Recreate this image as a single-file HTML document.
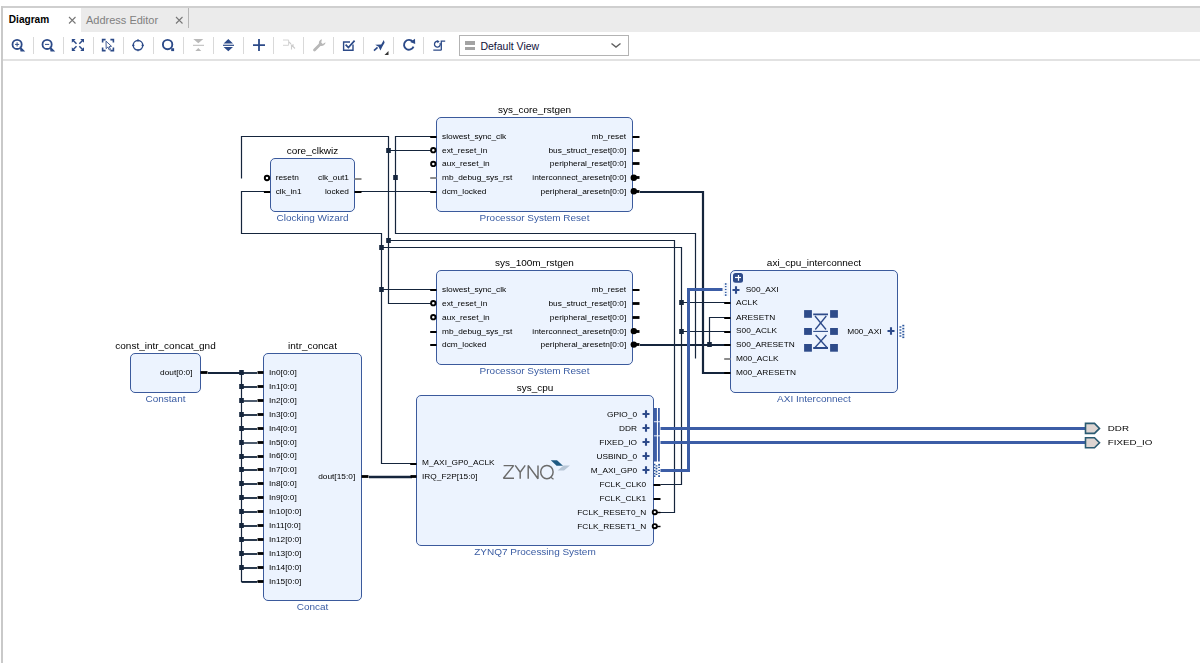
<!DOCTYPE html>
<html><head><meta charset="utf-8"><style>
html,body{margin:0;padding:0;background:#fff;width:1200px;height:663px;overflow:hidden;position:relative;font-family:"Liberation Sans",sans-serif}
.a{position:absolute}
svg text{font-family:"Liberation Sans",sans-serif}
</style></head><body>
<div class="a" style="left:0;top:0;width:1200px;height:5px;background:#fff"></div>
<div class="a" style="left:1px;top:5.5px;width:1199px;height:2px;background:#cfcfcf"></div>
<div class="a" style="left:1px;top:6px;width:1.6px;height:657px;background:#c9c9c9"></div>
<div class="a" style="left:2.6px;top:7.5px;width:1197.4px;height:24.2px;background:#ebebeb"></div>
<div class="a" style="left:2.6px;top:7.5px;width:78.6px;height:24.2px;background:#fff"></div>
<div class="a" style="left:8.8px;top:13px;font-size:10.1px;font-weight:bold;color:#000;line-height:14px">Diagram</div>
<svg class="a" style="left:68px;top:16px" width="9" height="9"><path d="M1,1 L7.5,7.5 M7.5,1 L1,7.5" stroke="#777" stroke-width="1.1"/></svg>
<div class="a" style="left:86px;top:12.7px;font-size:11px;color:#808080;line-height:14px">Address Editor</div>
<svg class="a" style="left:175px;top:16px" width="9" height="9"><path d="M1,1 L7.5,7.5 M7.5,1 L1,7.5" stroke="#777" stroke-width="1.1"/></svg>
<div class="a" style="left:187.6px;top:8px;width:1.4px;height:20px;background:#b5b5b5"></div>
<div class="a" style="left:2.6px;top:58.8px;width:1197.4px;height:2px;background:#e2e2e2"></div>
<div style="position:absolute;left:33px;top:37px;width:1px;height:17px;background:#d9d9d9"></div><div style="position:absolute;left:63px;top:37px;width:1px;height:17px;background:#d9d9d9"></div><div style="position:absolute;left:93px;top:37px;width:1px;height:17px;background:#d9d9d9"></div><div style="position:absolute;left:123px;top:37px;width:1px;height:17px;background:#d9d9d9"></div><div style="position:absolute;left:153px;top:37px;width:1px;height:17px;background:#d9d9d9"></div><div style="position:absolute;left:183px;top:37px;width:1px;height:17px;background:#d9d9d9"></div><div style="position:absolute;left:213px;top:37px;width:1px;height:17px;background:#d9d9d9"></div><div style="position:absolute;left:243px;top:37px;width:1px;height:17px;background:#d9d9d9"></div><div style="position:absolute;left:273px;top:37px;width:1px;height:17px;background:#d9d9d9"></div><div style="position:absolute;left:303px;top:37px;width:1px;height:17px;background:#d9d9d9"></div><div style="position:absolute;left:333px;top:37px;width:1px;height:17px;background:#d9d9d9"></div><div style="position:absolute;left:363px;top:37px;width:1px;height:17px;background:#d9d9d9"></div><div style="position:absolute;left:393px;top:37px;width:1px;height:17px;background:#d9d9d9"></div><div style="position:absolute;left:423px;top:37px;width:1px;height:17px;background:#d9d9d9"></div>
<svg class="a" style="left:0;top:0" width="460" height="60">
<circle cx="17.1" cy="44.4" r="4.6" fill="none" stroke="#2c4a88" stroke-width="1.8"/>
<path d="M15,44.4H19.2M17.1,42.3V46.5" stroke="#2c4a88" stroke-width="1"/>
<path d="M20.6,47.6 L23.8,50.8 L21,50.8 Z" fill="#2c4a88" stroke="#2c4a88" stroke-width="1.2"/>
<circle cx="47.1" cy="44.4" r="4.6" fill="none" stroke="#2c4a88" stroke-width="1.8"/>
<path d="M45,44.4H49.2" stroke="#2c4a88" stroke-width="1"/>
<path d="M50.6,47.6 L53.8,50.8 L51,50.8 Z" fill="#2c4a88" stroke="#2c4a88" stroke-width="1.2"/>
<path d="M71.8,39 H75.6 L71.8,42.8 Z M84,39 V42.8 L80.2,39 Z M71.8,51 V47.2 L75.6,51 Z M84,51 H80.2 L84,47.2 Z" fill="#2c4a88"/>
<path d="M72.5,39.7 L76.5,43.7 M83.3,39.7 L79.3,43.7 M72.5,50.3 L76.5,46.3 M83.3,50.3 L79.3,46.3" stroke="#2c4a88" stroke-width="1.5"/>
<path d="M102.6,42.6 V39.6 H105.6 M110.4,39.6 H113.4 V42.6 M113.4,47.6 V50.6 H110.4 M105.6,50.6 H102.6 V47.6" fill="none" stroke="#2c4a88" stroke-width="1.6"/>
<path d="M106,41.2 L106.2,48.6 L107.9,47 L109.3,50 L110.5,49.4 L109.2,46.5 L111.5,46.3 Z" fill="#fff" stroke="#2c4a88" stroke-width="0.9"/>
<circle cx="138" cy="45.3" r="4.8" fill="none" stroke="#2c4a88" stroke-width="1.4"/>
<path d="M138,39.3 V41.5 M138,49.1 V51.3 M132.2,45.3 H134.4 M141.6,45.3 H143.8" stroke="#2c4a88" stroke-width="1.2"/>
<circle cx="167.6" cy="44.6" r="4.7" fill="none" stroke="#2c4a88" stroke-width="1.9"/>
<rect x="171.2" y="48.2" width="2.9" height="2.9" fill="#2c4a88"/>
<path d="M193.3,39 H203.3 L198.3,43.2 Z M195.3,51 H201.3 L198.3,47.9 Z" fill="#b9b9b9"/>
<path d="M193,45.3 H204" stroke="#b9b9b9" stroke-width="1"/>
<path d="M223.6,43.6 H233 L228.3,39 Z M223.6,47 H233 L228.3,51.3 Z" fill="#2c4a88"/>
<path d="M223,45.3 H234" stroke="#2c4a88" stroke-width="1.2"/>
<path d="M259,39 V51 M253,45.2 H265" stroke="#2c4a88" stroke-width="1.8"/>
<path d="M283,40 H288.6 V45.3 H283" fill="none" stroke="#d4d4d4" stroke-width="1"/>
<path d="M289,42 L291,44 M291.5,49.5 L291.5,45 M291.5,45 L295,48.5 M290.8,45 H294" stroke="#cdcdcd" stroke-width="1.1" fill="none"/>
<path d="M314.5,50 L320.5,44" stroke="#b8b8b8" stroke-width="2.8" stroke-linecap="round"/>
<path d="M319.5,45 A3.6,3.6 0 0 1 322,39.3 L321.2,42.5 L322.8,44 L325.5,42.2 A3.6,3.6 0 0 1 319.5,45 Z" fill="#b8b8b8"/>
<path d="M353,44.5 V50.3 H343.6 V42 H350" fill="none" stroke="#2c4a88" stroke-width="1.4"/>
<path d="M345.6,44.6 L348.4,47.6 L354.6,40.6" fill="none" stroke="#2c4a88" stroke-width="1.7"/>
<path d="M374,50.6 L377.5,47.3" stroke="#2c4a88" stroke-width="1.6"/>
<path d="M375.2,44.8 L381.2,44.6 L383.8,40 L384.6,42.8 L382.4,46.6 L380.4,50.5 L378.6,46.8 Z" fill="#2c4a88"/>
<path d="M384.5,55 H388.5 V51 Z" fill="#333"/>
<path d="M413.5,46.6 A4.9,4.9 0 1 1 412.8,41.8" fill="none" stroke="#2c4a88" stroke-width="1.9"/>
<path d="M410.2,41.9 L415.2,43.9 L415,38.8 Z" fill="#2c4a88"/>
<path d="M438.6,41.6 A2.9,2.9 0 1 0 440,43" fill="none" stroke="#2c4a88" stroke-width="1.3"/>
<path d="M436.6,40 L439.6,41.3 L437.6,43.3 Z" fill="#2c4a88"/>
<path d="M441.3,50.2 V41.1 H445.2 M433.3,50.2 H441.3" fill="none" stroke="#2c4a88" stroke-width="1.3"/>
</svg>
<div class="a" style="left:459px;top:35px;width:168px;height:18.5px;border:1px solid #b3b3b3;background:#fff"></div>
<div class="a" style="left:465px;top:41px;width:10px;height:3.6px;background:#a3a3a3"></div>
<div class="a" style="left:465px;top:47px;width:10px;height:3.4px;background:#a3a3a3"></div>
<div class="a" style="left:480.4px;top:38.5px;font-size:10.5px;color:#10103a;line-height:14px">Default View</div>
<svg class="a" style="left:610px;top:40px" width="12" height="9"><path d="M1.5,3.5 L6,7 L10.5,3.5" fill="none" stroke="#606060" stroke-width="1.4"/></svg>
<svg class="a" style="left:0;top:0;will-change:transform" width="1200" height="663">
<polyline points="241.5,178.5 241.5,136.5 388.5,136.5 388.5,303.5 431.5,303.5" fill="none" stroke="#15253c" stroke-width="1.2" stroke-linejoin="miter"/>
<polyline points="388.5,150.5 431.5,150.5" fill="none" stroke="#15253c" stroke-width="1.2" stroke-linejoin="miter"/>
<polyline points="388.5,240.5 674.5,240.5 674.5,512.5 659.5,512.5" fill="none" stroke="#15253c" stroke-width="1.2" stroke-linejoin="miter"/>
<rect x="386.2" y="148.0" width="4.6" height="5" fill="#15253c"/>
<rect x="386.2" y="238.0" width="4.6" height="5" fill="#15253c"/>
<polyline points="268.5,191.5 241.5,191.5 241.5,233.5 381.5,233.5 381.5,463.5 411.5,463.5" fill="none" stroke="#15253c" stroke-width="1.2" stroke-linejoin="miter"/>
<polyline points="381.5,247.5 681.5,247.5 681.5,484.5 660.5,484.5" fill="none" stroke="#15253c" stroke-width="1.2" stroke-linejoin="miter"/>
<polyline points="381.5,289.5 431.5,289.5" fill="none" stroke="#15253c" stroke-width="1.2" stroke-linejoin="miter"/>
<polyline points="681.5,302.5 725.5,302.5" fill="none" stroke="#15253c" stroke-width="1.2" stroke-linejoin="miter"/>
<polyline points="681.5,331.5 725.5,331.5" fill="none" stroke="#15253c" stroke-width="1.2" stroke-linejoin="miter"/>
<rect x="379.2" y="245.0" width="4.6" height="5" fill="#15253c"/>
<rect x="379.2" y="287.0" width="4.6" height="5" fill="#15253c"/>
<rect x="679.2" y="300.0" width="4.6" height="5" fill="#15253c"/>
<rect x="679.2" y="329.0" width="4.6" height="5" fill="#15253c"/>
<polyline points="431.5,136.5 395.5,136.5 395.5,233.5 695.5,233.5 695.5,358.5" fill="none" stroke="#15253c" stroke-width="1.2" stroke-linejoin="miter"/>
<rect x="393.2" y="175.0" width="4.6" height="5" fill="#15253c"/>
<polyline points="360.5,191.5 431.5,191.5" fill="none" stroke="#15253c" stroke-width="1.2" stroke-linejoin="miter"/>
<polyline points="640,192 703,192 703,373 726,373" fill="none" stroke="#15253c" stroke-width="2.2" stroke-linejoin="miter"/>
<polyline points="640,345 726,345" fill="none" stroke="#15253c" stroke-width="2.2" stroke-linejoin="miter"/>
<polyline points="709.5,344.5 709.5,317.5 725.5,317.5" fill="none" stroke="#15253c" stroke-width="1.2" stroke-linejoin="miter"/>
<rect x="707.2" y="342.0" width="4.6" height="5" fill="#15253c"/>
<polyline points="208,373 242,373" fill="none" stroke="#15253c" stroke-width="2" stroke-linejoin="miter"/>
<polyline points="241.5,372.5 241.5,581.5 257.5,581.5" fill="none" stroke="#15253c" stroke-width="1.2" stroke-linejoin="miter"/>
<line x1="241.5" y1="373" x2="257" y2="373" stroke="#15253c" stroke-width="1.8"/>
<rect x="239.2" y="370.0" width="4.6" height="5" fill="#15253c"/>
<line x1="241.5" y1="387" x2="257" y2="387" stroke="#15253c" stroke-width="1.8"/>
<rect x="239.2" y="384.0" width="4.6" height="5" fill="#15253c"/>
<line x1="241.5" y1="401" x2="257" y2="401" stroke="#3a4a5e" stroke-width="1.8"/>
<rect x="239.2" y="398.0" width="4.6" height="5" fill="#15253c"/>
<line x1="241.5" y1="415" x2="257" y2="415" stroke="#15253c" stroke-width="1.8"/>
<rect x="239.2" y="412.0" width="4.6" height="5" fill="#15253c"/>
<line x1="241.5" y1="429" x2="257" y2="429" stroke="#15253c" stroke-width="1.8"/>
<rect x="239.2" y="426.0" width="4.6" height="5" fill="#15253c"/>
<line x1="241.5" y1="443" x2="257" y2="443" stroke="#3a4a5e" stroke-width="1.8"/>
<rect x="239.2" y="440.0" width="4.6" height="5" fill="#15253c"/>
<line x1="241.5" y1="457" x2="257" y2="457" stroke="#15253c" stroke-width="1.8"/>
<rect x="239.2" y="454.0" width="4.6" height="5" fill="#15253c"/>
<line x1="241.5" y1="470" x2="257" y2="470" stroke="#15253c" stroke-width="1.8"/>
<rect x="239.2" y="467.0" width="4.6" height="5" fill="#15253c"/>
<line x1="241.5" y1="484" x2="257" y2="484" stroke="#15253c" stroke-width="1.8"/>
<rect x="239.2" y="481.0" width="4.6" height="5" fill="#15253c"/>
<line x1="241.5" y1="498" x2="257" y2="498" stroke="#15253c" stroke-width="1.8"/>
<rect x="239.2" y="495.0" width="4.6" height="5" fill="#15253c"/>
<line x1="241.5" y1="512" x2="257" y2="512" stroke="#15253c" stroke-width="1.8"/>
<rect x="239.2" y="509.0" width="4.6" height="5" fill="#15253c"/>
<line x1="241.5" y1="526" x2="257" y2="526" stroke="#15253c" stroke-width="1.8"/>
<rect x="239.2" y="523.0" width="4.6" height="5" fill="#15253c"/>
<line x1="241.5" y1="540" x2="257" y2="540" stroke="#15253c" stroke-width="1.8"/>
<rect x="239.2" y="537.0" width="4.6" height="5" fill="#15253c"/>
<line x1="241.5" y1="554" x2="257" y2="554" stroke="#15253c" stroke-width="1.8"/>
<rect x="239.2" y="551.0" width="4.6" height="5" fill="#15253c"/>
<line x1="241.5" y1="568" x2="257" y2="568" stroke="#15253c" stroke-width="1.8"/>
<rect x="239.2" y="565.0" width="4.6" height="5" fill="#15253c"/>
<line x1="241.5" y1="582" x2="257" y2="582" stroke="#15253c" stroke-width="1.8"/>
<polyline points="369,477 412,477" fill="none" stroke="#15253c" stroke-width="2.4" stroke-linejoin="miter"/>
<polyline points="660.5,428.5 1086.5,428.5" fill="none" stroke="#3c5da6" stroke-width="3" stroke-linejoin="miter"/>
<polyline points="660.5,442.5 1086.5,442.5" fill="none" stroke="#3c5da6" stroke-width="3" stroke-linejoin="miter"/>
<polyline points="660.5,470.5 688.5,470.5 688.5,289.5 722.5,289.5" fill="none" stroke="#3c5da6" stroke-width="3" stroke-linejoin="miter"/>
<rect x="270.5" y="158.5" width="84.0" height="53.0" rx="4.5" ry="4.5" fill="#ecf3fe" stroke="#3b5a9c" stroke-width="1"/>
<text transform="translate(312.5,154.0) scale(1,0.82)" font-size="10" text-anchor="middle" fill="#000"  >core_clkwiz</text>
<text transform="translate(312.5,221.1) scale(1,0.82)" font-size="10" text-anchor="middle" fill="#3a5ca3"  >Clocking Wizard</text>
<circle cx="267.0" cy="178" r="2.2" fill="#fff" stroke="#000" stroke-width="1.9"/>
<text transform="translate(275.7,180.4) scale(1,0.82)" font-size="8.33" text-anchor="start" fill="#000"  >resetn</text>
<line x1="263.9" y1="192" x2="270.2" y2="192" stroke="#000" stroke-width="2"/>
<text transform="translate(275.7,193.70000000000002) scale(1,0.82)" font-size="8.33" text-anchor="start" fill="#000"  >clk_in1</text>
<line x1="354.5" y1="179" x2="361.5" y2="179" stroke="#8c8c8c" stroke-width="2"/>
<text transform="translate(349.0,180.4) scale(1,0.82)" font-size="8.33" text-anchor="end" fill="#000"  >clk_out1</text>
<line x1="354.5" y1="192" x2="361.5" y2="192" stroke="#000" stroke-width="2"/>
<text transform="translate(349.0,193.70000000000002) scale(1,0.82)" font-size="8.33" text-anchor="end" fill="#000"  >locked</text>
<rect x="436.5" y="117.5" width="196.0" height="94.0" rx="4.5" ry="4.5" fill="#ecf3fe" stroke="#3b5a9c" stroke-width="1"/>
<text transform="translate(534.5,113.0) scale(1,0.82)" font-size="10" text-anchor="middle" fill="#000"  >sys_core_rstgen</text>
<text transform="translate(534.5,221.1) scale(1,0.82)" font-size="10" text-anchor="middle" fill="#3a5ca3"  >Processor System Reset</text>
<line x1="430.2" y1="137" x2="436.5" y2="137" stroke="#000" stroke-width="2"/>
<text transform="translate(442.0,138.9) scale(1,0.82)" font-size="8.33" text-anchor="start" fill="#000"  >slowest_sync_clk</text>
<circle cx="433.3" cy="150.2" r="2.2" fill="#fff" stroke="#000" stroke-width="1.9"/>
<text transform="translate(442.0,152.6) scale(1,0.82)" font-size="8.33" text-anchor="start" fill="#000"  >ext_reset_in</text>
<circle cx="433.3" cy="163.9" r="2.2" fill="#fff" stroke="#000" stroke-width="1.9"/>
<text transform="translate(442.0,166.3) scale(1,0.82)" font-size="8.33" text-anchor="start" fill="#000"  >aux_reset_in</text>
<line x1="430.2" y1="178" x2="436.5" y2="178" stroke="#8c8c8c" stroke-width="2"/>
<text transform="translate(442.0,180.1) scale(1,0.82)" font-size="8.33" text-anchor="start" fill="#000"  >mb_debug_sys_rst</text>
<line x1="430.2" y1="192" x2="436.5" y2="192" stroke="#000" stroke-width="2"/>
<text transform="translate(442.0,193.70000000000002) scale(1,0.82)" font-size="8.33" text-anchor="start" fill="#000"  >dcm_locked</text>
<line x1="632.5" y1="137" x2="639.5" y2="137" stroke="#000" stroke-width="2"/>
<text transform="translate(626.2,138.9) scale(1,0.82)" font-size="8.33" text-anchor="end" fill="#000"  >mb_reset</text>
<line x1="632.5" y1="150.5" x2="639.5" y2="150.5" stroke="#000" stroke-width="2.8"/>
<text transform="translate(626.2,152.6) scale(1,0.82)" font-size="8.33" text-anchor="end" fill="#000"  >bus_struct_reset[0:0]</text>
<line x1="632.5" y1="163.5" x2="639.5" y2="163.5" stroke="#000" stroke-width="2.8"/>
<text transform="translate(626.2,166.3) scale(1,0.82)" font-size="8.33" text-anchor="end" fill="#000"  >peripheral_reset[0:0]</text>
<line x1="632.5" y1="177.5" x2="639.5" y2="177.5" stroke="#000" stroke-width="2.8"/>
<circle cx="633.8" cy="177.7" r="3.2" fill="#000"/>
<text transform="translate(626.2,180.1) scale(1,0.82)" font-size="8.33" text-anchor="end" fill="#000"  >interconnect_aresetn[0:0]</text>
<line x1="632.5" y1="191.5" x2="639.5" y2="191.5" stroke="#000" stroke-width="2.8"/>
<circle cx="633.8" cy="191.3" r="3.2" fill="#000"/>
<text transform="translate(626.2,193.70000000000002) scale(1,0.82)" font-size="8.33" text-anchor="end" fill="#000"  >peripheral_aresetn[0:0]</text>
<rect x="436.5" y="270.5" width="196.0" height="94.0" rx="4.5" ry="4.5" fill="#ecf3fe" stroke="#3b5a9c" stroke-width="1"/>
<text transform="translate(534.5,266.0) scale(1,0.82)" font-size="10" text-anchor="middle" fill="#000"  >sys_100m_rstgen</text>
<text transform="translate(534.5,374.1) scale(1,0.82)" font-size="10" text-anchor="middle" fill="#3a5ca3"  >Processor System Reset</text>
<line x1="430.2" y1="290" x2="436.5" y2="290" stroke="#000" stroke-width="2"/>
<text transform="translate(442.0,291.7) scale(1,0.82)" font-size="8.33" text-anchor="start" fill="#000"  >slowest_sync_clk</text>
<circle cx="433.3" cy="303.2" r="2.2" fill="#fff" stroke="#000" stroke-width="1.9"/>
<text transform="translate(442.0,305.59999999999997) scale(1,0.82)" font-size="8.33" text-anchor="start" fill="#000"  >ext_reset_in</text>
<circle cx="433.3" cy="317.2" r="2.2" fill="#fff" stroke="#000" stroke-width="1.9"/>
<text transform="translate(442.0,319.59999999999997) scale(1,0.82)" font-size="8.33" text-anchor="start" fill="#000"  >aux_reset_in</text>
<line x1="430.2" y1="332" x2="436.5" y2="332" stroke="#000" stroke-width="2"/>
<text transform="translate(442.0,333.5) scale(1,0.82)" font-size="8.33" text-anchor="start" fill="#000"  >mb_debug_sys_rst</text>
<line x1="430.2" y1="345" x2="436.5" y2="345" stroke="#000" stroke-width="2"/>
<text transform="translate(442.0,347.0) scale(1,0.82)" font-size="8.33" text-anchor="start" fill="#000"  >dcm_locked</text>
<line x1="632.5" y1="290" x2="639.5" y2="290" stroke="#000" stroke-width="2"/>
<text transform="translate(626.2,291.7) scale(1,0.82)" font-size="8.33" text-anchor="end" fill="#000"  >mb_reset</text>
<line x1="632.5" y1="303.5" x2="639.5" y2="303.5" stroke="#000" stroke-width="2.8"/>
<text transform="translate(626.2,305.59999999999997) scale(1,0.82)" font-size="8.33" text-anchor="end" fill="#000"  >bus_struct_reset[0:0]</text>
<line x1="632.5" y1="317.5" x2="639.5" y2="317.5" stroke="#000" stroke-width="2.8"/>
<text transform="translate(626.2,319.59999999999997) scale(1,0.82)" font-size="8.33" text-anchor="end" fill="#000"  >peripheral_reset[0:0]</text>
<line x1="632.5" y1="331.5" x2="639.5" y2="331.5" stroke="#000" stroke-width="2.8"/>
<circle cx="633.8" cy="331.1" r="3.2" fill="#000"/>
<text transform="translate(626.2,333.5) scale(1,0.82)" font-size="8.33" text-anchor="end" fill="#000"  >interconnect_aresetn[0:0]</text>
<line x1="632.5" y1="344.5" x2="639.5" y2="344.5" stroke="#000" stroke-width="2.8"/>
<circle cx="633.8" cy="344.6" r="3.2" fill="#000"/>
<text transform="translate(626.2,347.0) scale(1,0.82)" font-size="8.33" text-anchor="end" fill="#000"  >peripheral_aresetn[0:0]</text>
<rect x="730.5" y="270.5" width="167.0" height="122.0" rx="4.5" ry="4.5" fill="#ecf3fe" stroke="#3b5a9c" stroke-width="1"/>
<text transform="translate(814.0,266.0) scale(1,0.82)" font-size="10" text-anchor="middle" fill="#000"  >axi_cpu_interconnect</text>
<text transform="translate(814.0,402.1) scale(1,0.82)" font-size="10" text-anchor="middle" fill="#3a5ca3"  >AXI Interconnect</text>
<rect x="733" y="273" width="10" height="9.8" rx="2.5" fill="#2e4b8a"/>
<line x1="735" y1="277.5" x2="741" y2="277.5" stroke="#fff" stroke-width="1.2"/>
<line x1="738.5" y1="275" x2="738.5" y2="280.8" stroke="#fff" stroke-width="1.2"/>
<rect x="723.2" y="283" width="5.5" height="13" fill="#f3f6fb"/>
<rect x="724.9" y="283.2" width="1.6" height="1.6" fill="#2f5aa0"/>
<rect x="724.9" y="286.05" width="1.6" height="1.1" fill="#2f5aa0"/>
<rect x="724.9" y="288.95" width="1.6" height="1.1" fill="#2f5aa0"/>
<rect x="724.9" y="291.84999999999997" width="1.6" height="1.1" fill="#2f5aa0"/>
<rect x="724.9" y="294.3" width="1.6" height="1.6" fill="#2f5aa0"/>
<path d="M732.5,290H739.5M736,286.2V293.8" stroke="#2d4a8a" stroke-width="2.1"/>
<text transform="translate(745.7,292.2) scale(1,0.82)" font-size="8.33" text-anchor="start" fill="#000"  >S00_AXI</text>
<line x1="724.2" y1="303" x2="730.5" y2="303" stroke="#000" stroke-width="2"/>
<text transform="translate(736.0,305.09999999999997) scale(1,0.82)" font-size="8.33" text-anchor="start" fill="#000"  >ACLK</text>
<line x1="724.2" y1="318" x2="730.5" y2="318" stroke="#000" stroke-width="2"/>
<text transform="translate(736.0,319.7) scale(1,0.82)" font-size="8.33" text-anchor="start" fill="#000"  >ARESETN</text>
<line x1="724.2" y1="332" x2="730.5" y2="332" stroke="#000" stroke-width="2"/>
<text transform="translate(736.0,333.4) scale(1,0.82)" font-size="8.33" text-anchor="start" fill="#000"  >S00_ACLK</text>
<line x1="724.2" y1="345" x2="730.5" y2="345" stroke="#000" stroke-width="2"/>
<text transform="translate(736.0,346.9) scale(1,0.82)" font-size="8.33" text-anchor="start" fill="#000"  >S00_ARESETN</text>
<line x1="724.2" y1="359" x2="730.5" y2="359" stroke="#8c8c8c" stroke-width="2"/>
<text transform="translate(736.0,360.59999999999997) scale(1,0.82)" font-size="8.33" text-anchor="start" fill="#000"  >M00_ACLK</text>
<line x1="724.2" y1="373" x2="730.5" y2="373" stroke="#000" stroke-width="2"/>
<text transform="translate(736.0,374.7) scale(1,0.82)" font-size="8.33" text-anchor="start" fill="#000"  >M00_ARESETN</text>
<rect x="804.1" y="310.1" width="7.8" height="7.7" fill="#2e4b8a"/>
<rect x="830.1" y="310.1" width="7.8" height="7.7" fill="#2e4b8a"/>
<rect x="804.1" y="328" width="7.8" height="6.9" fill="#2e4b8a"/>
<rect x="830.1" y="328" width="7.8" height="6.9" fill="#2e4b8a"/>
<rect x="804.1" y="344" width="7.8" height="7.7" fill="#2e4b8a"/>
<rect x="830.1" y="344" width="7.8" height="7.7" fill="#2e4b8a"/>
<path d="M813.2,314.4 H828 M813.2,348 H828" stroke="#2e4b8a" stroke-width="1.9" fill="none"/>
<path d="M813.2,331.4 H828" stroke="#2e4b8a" stroke-width="1.1" fill="none"/>
<path d="M815,316 L826,329.5 M826.3,316 L815.3,329.5 M815.6,335 L827,347.5 M826.4,335 L815,347.5" stroke="#2e4b8a" stroke-width="1.3" fill="none"/>
<text transform="translate(847.3,333.6) scale(1,0.82)" font-size="8.33" text-anchor="start" fill="#000"  >M00_AXI</text>
<path d="M887.5,331H894.5M891,327.2V334.8" stroke="#2d4a8a" stroke-width="2.1"/>
<rect x="899.4" y="326.3" width="2" height="1.4" fill="#2f5aa0"/>
<rect x="899.4" y="329.3" width="2" height="1.4" fill="#2f5aa0"/>
<rect x="899.4" y="332.3" width="2" height="1.4" fill="#2f5aa0"/>
<rect x="899.4" y="335.3" width="2" height="1.4" fill="#2f5aa0"/>
<rect x="902.3" y="324.8" width="2" height="1.6" fill="#2f5aa0"/>
<rect x="902.3" y="327.8" width="2" height="1.6" fill="#2f5aa0"/>
<rect x="902.3" y="330.8" width="2" height="1.6" fill="#2f5aa0"/>
<rect x="902.3" y="333.8" width="2" height="1.6" fill="#2f5aa0"/>
<rect x="902.3" y="336.5" width="2" height="1.6" fill="#2f5aa0"/>
<rect x="416.5" y="395.5" width="237.0" height="150.0" rx="4.5" ry="4.5" fill="#ecf3fe" stroke="#3b5a9c" stroke-width="1"/>
<text transform="translate(535.0,391.0) scale(1,0.82)" font-size="10" text-anchor="middle" fill="#000"  >sys_cpu</text>
<text transform="translate(535.0,555.1) scale(1,0.82)" font-size="10" text-anchor="middle" fill="#3a5ca3"  >ZYNQ7 Processing System</text>
<line x1="410.2" y1="464" x2="416.5" y2="464" stroke="#000" stroke-width="2"/>
<text transform="translate(422.0,465.4) scale(1,0.82)" font-size="8.33" text-anchor="start" fill="#000"  >M_AXI_GP0_ACLK</text>
<line x1="410.5" y1="476.5" x2="416.5" y2="476.5" stroke="#000" stroke-width="2.8"/>
<text transform="translate(422.0,479.0) scale(1,0.82)" font-size="8.33" text-anchor="start" fill="#000"  >IRQ_F2P[15:0]</text>
<text transform="translate(637.1,416.59999999999997) scale(1,0.82)" font-size="8.33" text-anchor="end" fill="#000"  >GPIO_0</text>
<path d="M642.5,414H649.5M646,410.2V417.8" stroke="#2d4a8a" stroke-width="2.1"/>
<text transform="translate(637.1,430.59999999999997) scale(1,0.82)" font-size="8.33" text-anchor="end" fill="#000"  >DDR</text>
<path d="M642.5,428H649.5M646,424.2V431.8" stroke="#2d4a8a" stroke-width="2.1"/>
<text transform="translate(637.1,444.59999999999997) scale(1,0.82)" font-size="8.33" text-anchor="end" fill="#000"  >FIXED_IO</text>
<path d="M642.5,442H649.5M646,438.2V445.8" stroke="#2d4a8a" stroke-width="2.1"/>
<text transform="translate(637.1,458.59999999999997) scale(1,0.82)" font-size="8.33" text-anchor="end" fill="#000"  >USBIND_0</text>
<path d="M642.5,456H649.5M646,452.2V459.8" stroke="#2d4a8a" stroke-width="2.1"/>
<text transform="translate(637.1,472.59999999999997) scale(1,0.82)" font-size="8.33" text-anchor="end" fill="#000"  >M_AXI_GP0</text>
<path d="M642.5,470H649.5M646,466.2V473.8" stroke="#2d4a8a" stroke-width="2.1"/>
<rect x="654" y="408" width="2.9" height="53.5" fill="#3c5da6"/>
<rect x="658" y="408" width="1.8" height="53.5" fill="#3c5da6"/>
<rect x="653.9" y="421.3" width="7" height="0.9" fill="#fff"/>
<rect x="653.9" y="435.4" width="7" height="0.9" fill="#fff"/>
<rect x="653.8" y="463.8" width="1.6" height="1.6" fill="#2f5aa0"/>
<rect x="653.8" y="466.90000000000003" width="1.6" height="1.4" fill="#2f5aa0"/>
<rect x="653.8" y="469.90000000000003" width="1.6" height="1.4" fill="#2f5aa0"/>
<rect x="653.8" y="472.90000000000003" width="1.6" height="1.4" fill="#2f5aa0"/>
<rect x="653.8" y="475.4" width="1.6" height="1.6" fill="#2f5aa0"/>
<rect x="655.6" y="465.29999999999995" width="1.8" height="1.2" fill="#2f5aa0"/>
<rect x="655.6" y="467.70000000000005" width="1.8" height="1.8" fill="#2f5aa0"/>
<rect x="655.6" y="470.70000000000005" width="1.8" height="1.8" fill="#2f5aa0"/>
<rect x="655.6" y="473.79999999999995" width="1.8" height="1.2" fill="#2f5aa0"/>
<rect x="658.2" y="463.90000000000003" width="1.8" height="1.8" fill="#2f5aa0"/>
<rect x="658.2" y="466.84999999999997" width="1.8" height="1.1" fill="#2f5aa0"/>
<rect x="658.2" y="469.84999999999997" width="1.8" height="1.1" fill="#2f5aa0"/>
<rect x="658.2" y="472.84999999999997" width="1.8" height="1.1" fill="#2f5aa0"/>
<rect x="658.2" y="475.20000000000005" width="1.8" height="1.8" fill="#2f5aa0"/>
<line x1="653.5" y1="485" x2="660.5" y2="485" stroke="#000" stroke-width="2"/>
<text transform="translate(646.2,486.59999999999997) scale(1,0.82)" font-size="8.33" text-anchor="end" fill="#000"  >FCLK_CLK0</text>
<line x1="653.5" y1="499" x2="660.5" y2="499" stroke="#000" stroke-width="2"/>
<text transform="translate(646.2,500.59999999999997) scale(1,0.82)" font-size="8.33" text-anchor="end" fill="#000"  >FCLK_CLK1</text>
<line x1="656.5" y1="512.5" x2="660.5" y2="512.5" stroke="#000" stroke-width="1.4"/>
<circle cx="654.8" cy="512.2" r="2.1" fill="#fff" stroke="#000" stroke-width="1.9"/>
<text transform="translate(646.2,514.6) scale(1,0.82)" font-size="8.33" text-anchor="end" fill="#000"  >FCLK_RESET0_N</text>
<line x1="656.5" y1="526.5" x2="660.5" y2="526.5" stroke="#000" stroke-width="1.4"/>
<circle cx="654.8" cy="526.2" r="2.1" fill="#fff" stroke="#000" stroke-width="1.9"/>
<text transform="translate(646.2,528.6) scale(1,0.82)" font-size="8.33" text-anchor="end" fill="#000"  >FCLK_RESET1_N</text>
<path d="M503.6,465.6 H513.6 L503.4,478.3 H514 M515.2,465.4 L520.2,472.3 L525.2,465.4 M520.2,472.3 V478.8 M528.2,478.8 V465.4 L538,478.8 V465.4" fill="none" stroke="#6b6b6b" stroke-width="1.45" stroke-linejoin="bevel"/>
<ellipse cx="546.9" cy="472.1" rx="6.2" ry="6.7" fill="none" stroke="#6b6b6b" stroke-width="1.45"/>
<path d="M550.5,477 L553.5,479.3" stroke="#6b6b6b" stroke-width="1.2"/>
<polygon points="550.8,460.2 557,460.2 563,465.8 556.6,465.8" fill="#1f5a82"/>
<polygon points="563.5,465.4 570,465.4 564,470.6 557.6,470.6" fill="#b7c6d6"/>
<rect x="130.5" y="353.5" width="70.0" height="39.0" rx="4.5" ry="4.5" fill="#ecf3fe" stroke="#3b5a9c" stroke-width="1"/>
<text transform="translate(165.5,349.0) scale(1,0.82)" font-size="10" text-anchor="middle" fill="#000"  >const_intr_concat_gnd</text>
<text transform="translate(165.5,402.1) scale(1,0.82)" font-size="10" text-anchor="middle" fill="#3a5ca3"  >Constant</text>
<line x1="200.5" y1="372.5" x2="207.5" y2="372.5" stroke="#000" stroke-width="2.8"/>
<text transform="translate(192.5,374.9) scale(1,0.82)" font-size="8.33" text-anchor="end" fill="#000"  >dout[0:0]</text>
<rect x="263.5" y="353.5" width="98.0" height="247.0" rx="4.5" ry="4.5" fill="#ecf3fe" stroke="#3b5a9c" stroke-width="1"/>
<text transform="translate(312.5,349.0) scale(1,0.82)" font-size="10" text-anchor="middle" fill="#000"  >intr_concat</text>
<text transform="translate(312.5,610.1) scale(1,0.82)" font-size="10" text-anchor="middle" fill="#3a5ca3"  >Concat</text>
<line x1="257.5" y1="372.5" x2="263.5" y2="372.5" stroke="#000" stroke-width="2.8"/>
<text transform="translate(269.0,374.9) scale(1,0.82)" font-size="8.33" text-anchor="start" fill="#000"  >In0[0:0]</text>
<line x1="257.5" y1="386.5" x2="263.5" y2="386.5" stroke="#000" stroke-width="2.8"/>
<text transform="translate(269.0,388.82) scale(1,0.82)" font-size="8.33" text-anchor="start" fill="#000"  >In1[0:0]</text>
<line x1="257.5" y1="400.5" x2="263.5" y2="400.5" stroke="#000" stroke-width="2.8"/>
<text transform="translate(269.0,402.73999999999995) scale(1,0.82)" font-size="8.33" text-anchor="start" fill="#000"  >In2[0:0]</text>
<line x1="257.5" y1="414.5" x2="263.5" y2="414.5" stroke="#000" stroke-width="2.8"/>
<text transform="translate(269.0,416.65999999999997) scale(1,0.82)" font-size="8.33" text-anchor="start" fill="#000"  >In3[0:0]</text>
<line x1="257.5" y1="428.5" x2="263.5" y2="428.5" stroke="#000" stroke-width="2.8"/>
<text transform="translate(269.0,430.58) scale(1,0.82)" font-size="8.33" text-anchor="start" fill="#000"  >In4[0:0]</text>
<line x1="257.5" y1="442.5" x2="263.5" y2="442.5" stroke="#000" stroke-width="2.8"/>
<text transform="translate(269.0,444.5) scale(1,0.82)" font-size="8.33" text-anchor="start" fill="#000"  >In5[0:0]</text>
<line x1="257.5" y1="456.5" x2="263.5" y2="456.5" stroke="#000" stroke-width="2.8"/>
<text transform="translate(269.0,458.41999999999996) scale(1,0.82)" font-size="8.33" text-anchor="start" fill="#000"  >In6[0:0]</text>
<line x1="257.5" y1="469.5" x2="263.5" y2="469.5" stroke="#000" stroke-width="2.8"/>
<text transform="translate(269.0,472.34) scale(1,0.82)" font-size="8.33" text-anchor="start" fill="#000"  >In7[0:0]</text>
<line x1="257.5" y1="483.5" x2="263.5" y2="483.5" stroke="#000" stroke-width="2.8"/>
<text transform="translate(269.0,486.26) scale(1,0.82)" font-size="8.33" text-anchor="start" fill="#000"  >In8[0:0]</text>
<line x1="257.5" y1="497.5" x2="263.5" y2="497.5" stroke="#000" stroke-width="2.8"/>
<text transform="translate(269.0,500.17999999999995) scale(1,0.82)" font-size="8.33" text-anchor="start" fill="#000"  >In9[0:0]</text>
<line x1="257.5" y1="511.5" x2="263.5" y2="511.5" stroke="#000" stroke-width="2.8"/>
<text transform="translate(269.0,514.1) scale(1,0.82)" font-size="8.33" text-anchor="start" fill="#000"  >In10[0:0]</text>
<line x1="257.5" y1="525.5" x2="263.5" y2="525.5" stroke="#000" stroke-width="2.8"/>
<text transform="translate(269.0,528.02) scale(1,0.82)" font-size="8.33" text-anchor="start" fill="#000"  >In11[0:0]</text>
<line x1="257.5" y1="539.5" x2="263.5" y2="539.5" stroke="#000" stroke-width="2.8"/>
<text transform="translate(269.0,541.9399999999999) scale(1,0.82)" font-size="8.33" text-anchor="start" fill="#000"  >In12[0:0]</text>
<line x1="257.5" y1="553.5" x2="263.5" y2="553.5" stroke="#000" stroke-width="2.8"/>
<text transform="translate(269.0,555.86) scale(1,0.82)" font-size="8.33" text-anchor="start" fill="#000"  >In13[0:0]</text>
<line x1="257.5" y1="567.5" x2="263.5" y2="567.5" stroke="#000" stroke-width="2.8"/>
<text transform="translate(269.0,569.78) scale(1,0.82)" font-size="8.33" text-anchor="start" fill="#000"  >In14[0:0]</text>
<line x1="257.5" y1="581.5" x2="263.5" y2="581.5" stroke="#000" stroke-width="2.8"/>
<text transform="translate(269.0,583.6999999999999) scale(1,0.82)" font-size="8.33" text-anchor="start" fill="#000"  >In15[0:0]</text>
<line x1="361.5" y1="476.5" x2="368.5" y2="476.5" stroke="#000" stroke-width="2.8"/>
<text transform="translate(355.2,478.9) scale(1,0.82)" font-size="8.33" text-anchor="end" fill="#000"  >dout[15:0]</text>
<polygon points="1085.5,423.4 1094.5,423.4 1099.5,428.4 1094.5,433.4 1085.5,433.4" fill="#ddd5d2" stroke="#2a5b72" stroke-width="1.6"/>
<text transform="translate(1107.8,431.0) scale(1,0.82)" font-size="9.8" text-anchor="start" fill="#000"  >DDR</text>
<polygon points="1085.5,437.8 1094.5,437.8 1099.5,442.8 1094.5,447.8 1085.5,447.8" fill="#ddd5d2" stroke="#2a5b72" stroke-width="1.6"/>
<text transform="translate(1107.8,445.40000000000003) scale(1,0.82)" font-size="9.8" text-anchor="start" fill="#000"  >FIXED_IO</text>
</svg>
</body></html>
